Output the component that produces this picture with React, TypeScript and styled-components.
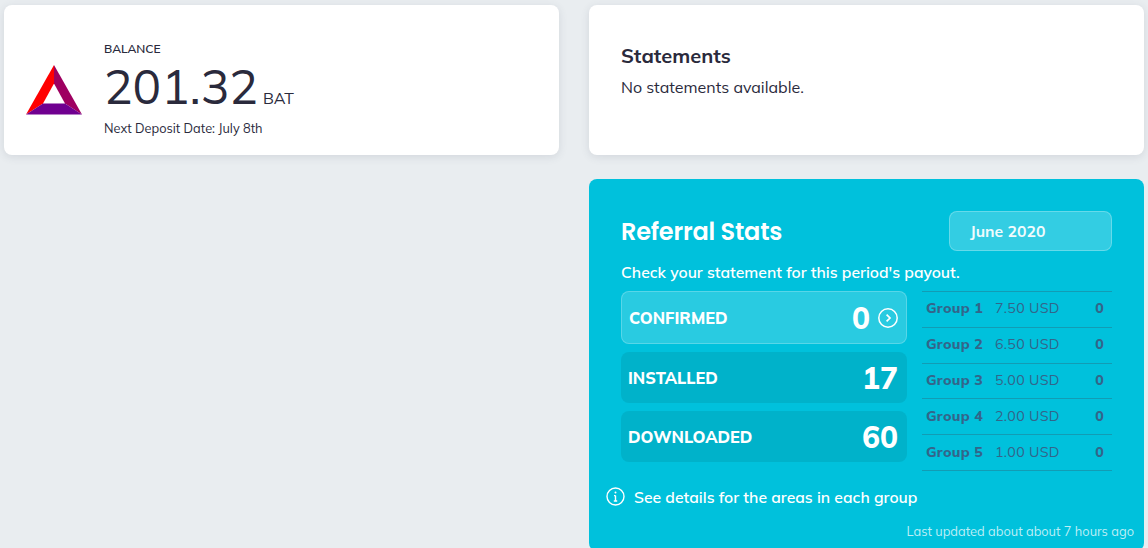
import React from "react";
import styled, { createGlobalStyle } from "styled-components";

const GlobalStyle = createGlobalStyle`
  html, body {
    margin: 0;
    padding: 0;
    height: 100%;
    overflow: hidden;
    background: #e9edf0;
  }
  * {
    box-sizing: border-box;
  }
`;

const bodyFont = `"Mulish", "Muli", "Nunito", "Lato", "Noto Sans", "Liberation Sans", sans-serif`;

const Page = styled.div`
  display: grid;
  grid-template-columns: 555px 555px;
  column-gap: 30px;
  row-gap: 24px;
  padding: 5px 4px 0;
  font-family: ${bodyFont};
  color: #2a2a3c;
`;

const Card = styled.section`
  height: 150px;
  background: #fff;
  border-radius: 8px;
  box-shadow: 0 2px 8px rgba(60, 70, 90, 0.13);
`;

const BalanceCard = styled(Card)`
  display: flex;
  align-items: center;
  padding: 0 22px;
  gap: 22px;
`;

const Logo = styled.svg`
  width: 56px;
  height: 50px;
  margin-top: 19px;
  flex: none;
`;

const BalanceInfo = styled.div`
  display: flex;
  flex-direction: column;
  margin-top: 18px;
`;

const BalanceLabel = styled.div`
  font-size: 12px;
  line-height: 16px;
  font-weight: 600;
`;

const AmountRow = styled.div`
  display: flex;
  align-items: baseline;
  gap: 5px;
  height: 60px;
`;

const Amount = styled.span`
  font-size: 47.7px;
  line-height: 58px;
  font-weight: 400;
`;

const Currency = styled.span`
  font-size: 16px;
  font-weight: 400;
`;

const DepositDate = styled.div`
  font-size: 12.75px;
  line-height: 18px;
  margin-top: 2px;
`;

const StatementsCard = styled(Card)`
  padding: 38px 32px 0;
`;

const StatementsTitle = styled.h2`
  margin: 0;
  font-size: 20px;
  line-height: 26px;
  font-weight: 700;
`;

const StatementsText = styled.p`
  margin: 8px 0 0;
  font-size: 16px;
  line-height: 20px;
`;

const ReferralCard = styled.section`
  grid-column: 2;
  height: 372px;
  background: #00c1dc;
  border-radius: 8px;
  padding: 32px 32px 0;
  color: #fff;
`;

const ReferralHeader = styled.div`
  display: flex;
  justify-content: space-between;
  align-items: center;
`;

const ReferralTitle = styled.h2`
  margin: 0;
  font-family: "Poppins", "Open Sans", "Lato", sans-serif;
  font-size: 24px;
  font-weight: 600;
  letter-spacing: -0.2px;
`;

const MonthButton = styled.div`
  width: 163px;
  height: 40px;
  display: flex;
  align-items: center;
  padding-left: 20px;
  background: rgba(255, 255, 255, 0.2);
  border: 1px solid rgba(255, 255, 255, 0.25);
  border-radius: 8px;
  font-size: 15.75px;
  font-weight: 700;
  color: #f0fbfd;
`;

const Hint = styled.p`
  margin: 11px 0 0;
  font-size: 15.75px;
  line-height: 20px;
  font-weight: 600;
`;

const StatsGrid = styled.div`
  display: grid;
  grid-template-columns: 286px 190px;
  justify-content: space-between;
  margin-top: 9px;
`;

const Tiles = styled.div`
  display: flex;
  flex-direction: column;
  gap: 8px;
`;

const Tile = styled.div<{ $active?: boolean }>`
  display: flex;
  align-items: center;
  justify-content: space-between;
  height: ${(p) => (p.$active ? "53px" : "51px")};
  padding: ${(p) => (p.$active ? "0 8px 0 7px" : "0 9px 0 7px")};
  border-radius: 8px;
  background: ${(p) => (p.$active ? "rgba(255, 255, 255, 0.16)" : "#00b2ca")};
  border: ${(p) => (p.$active ? "1px solid rgba(255, 255, 255, 0.22)" : "none")};
`;

const TileLabel = styled.span`
  font-size: 16.3px;
  font-weight: 800;
`;

const TileValue = styled.span`
  display: flex;
  align-items: center;
  gap: 8px;
  font-size: 30px;
  font-weight: 800;
`;

const GroupTable = styled.div`
  border-top: 1px solid #129cb4;
`;

const GroupRow = styled.div`
  display: grid;
  grid-template-columns: 69px 1fr auto;
  align-items: center;
  height: 35.8px;
  padding: 0 8px 2px 4px;
  border-bottom: 1px solid #129cb4;
  font-size: 14.2px;
  color: #33658a;
  letter-spacing: 0.3px;
`;

const GroupName = styled.span`
  font-weight: 800;
`;

const GroupCount = styled.span`
  font-weight: 800;
`;

const DetailsLink = styled.div`
  display: flex;
  align-items: center;
  gap: 9px;
  margin: 16px 0 0 -15px;
  font-size: 15.75px;
  line-height: 20px;
  font-weight: 600;
`;

const Updated = styled.div`
  margin: 16px -22px 0 0;
  text-align: right;
  font-size: 12.8px;
  color: #bdeef6;
`;

const groups = [
  { name: "Group 1", rate: "7.50 USD" },
  { name: "Group 2", rate: "6.50 USD" },
  { name: "Group 3", rate: "5.00 USD" },
  { name: "Group 4", rate: "2.00 USD" },
  { name: "Group 5", rate: "1.00 USD" },
];

function BatLogo() {
  return (
    <Logo viewBox="0 0 56 50">
      <polygon points="28,0 28,18.5 17,38.5 0,49.5" fill="#ff0000" />
      <polygon points="28,0 56,49.5 39,38.5 28,18.5" fill="#9e0060" />
      <polygon points="0,49.5 17,38.5 39,38.5 56,49.5" fill="#700090" />
    </Logo>
  );
}

function ArrowCircle() {
  return (
    <svg width="20" height="20" viewBox="0 0 20 20" fill="none" stroke="#fff">
      <circle cx="10" cy="10" r="9.2" strokeWidth="1.5" />
      <path d="M8.6 6.6 L12 10 L8.6 13.4" strokeWidth="1.7" />
    </svg>
  );
}

function InfoCircle() {
  return (
    <svg width="19" height="19" viewBox="0 0 19 19" fill="none" stroke="#fff">
      <circle cx="9.5" cy="9.5" r="8.5" strokeWidth="1.4" />
      <path d="M9.5 8.5 V14 M7.8 14 H11.2 M8 8.6 H9.5" strokeWidth="1.4" />
      <circle cx="9.5" cy="5.6" r="1" fill="#fff" stroke="none" />
    </svg>
  );
}

export default function App() {
  return (
    <Page>
      <GlobalStyle />
      <BalanceCard>
        <BatLogo />
        <BalanceInfo>
          <BalanceLabel>BALANCE</BalanceLabel>
          <AmountRow>
            <Amount>201.32</Amount>
            <Currency>BAT</Currency>
          </AmountRow>
          <DepositDate>Next Deposit Date: July 8th</DepositDate>
        </BalanceInfo>
      </BalanceCard>
      <StatementsCard>
        <StatementsTitle>Statements</StatementsTitle>
        <StatementsText>No statements available.</StatementsText>
      </StatementsCard>
      <ReferralCard>
        <ReferralHeader>
          <ReferralTitle>Referral Stats</ReferralTitle>
          <MonthButton>June 2020</MonthButton>
        </ReferralHeader>
        <Hint>Check your statement for this period's payout.</Hint>
        <StatsGrid>
          <Tiles>
            <Tile $active>
              <TileLabel>CONFIRMED</TileLabel>
              <TileValue>
                0 <ArrowCircle />
              </TileValue>
            </Tile>
            <Tile>
              <TileLabel>INSTALLED</TileLabel>
              <TileValue>17</TileValue>
            </Tile>
            <Tile>
              <TileLabel>DOWNLOADED</TileLabel>
              <TileValue>60</TileValue>
            </Tile>
          </Tiles>
          <GroupTable>
            {groups.map((g) => (
              <GroupRow key={g.name}>
                <GroupName>{g.name}</GroupName>
                <span>{g.rate}</span>
                <GroupCount>0</GroupCount>
              </GroupRow>
            ))}
          </GroupTable>
        </StatsGrid>
        <DetailsLink>
          <InfoCircle />
          See details for the areas in each group
        </DetailsLink>
        <Updated>Last updated about about 7 hours ago</Updated>
      </ReferralCard>
    </Page>
  );
}
